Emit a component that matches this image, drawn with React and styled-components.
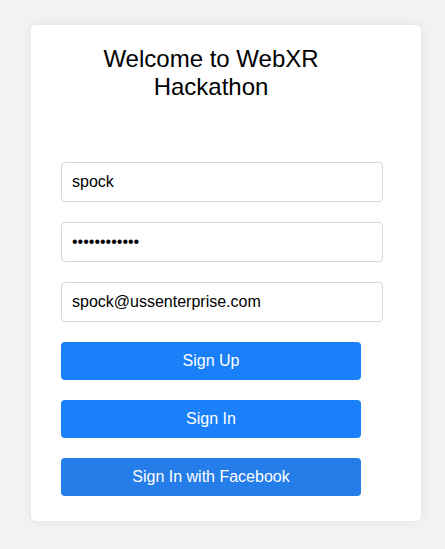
import React from 'react';
import styled, { createGlobalStyle } from 'styled-components';

const GlobalStyle = createGlobalStyle`
  html, body {
    margin: 0;
    padding: 0;
    background: #f2f2f2;
    font-family: "Liberation Sans", Arial, Helvetica, sans-serif;
  }
`;

const Page = styled.div`
  padding: 25px 0 29px 31px;
`;

const Card = styled.div`
  width: 330px;
  padding: 20px 30px 25px;
  background: #ffffff;
  border-radius: 5px;
  box-shadow: 0 0 10px rgba(0, 0, 0, 0.08);
`;

const Title = styled.h2`
  width: 300px;
  margin: 0 0 61px;
  font-size: 24px;
  font-weight: normal;
  line-height: normal;
  text-align: center;
  color: #000;
`;

const Form = styled.form`
  display: flex;
  flex-direction: column;
  align-items: flex-start;
  gap: 20px;
`;

const Input = styled.input`
  width: 300px;
  height: 18px;
  padding: 10px;
  border: 1px solid #d9d9d9;
  border-radius: 4px;
  font-family: "Liberation Sans", Arial, sans-serif;
  font-size: 16px;
  color: #000;
  outline: none;
`;

const Button = styled.button`
  width: 300px;
  height: 38px;
  border: none;
  border-radius: 4px;
  background: ${(p) => (p.$facebook ? '#247de9' : '#1a80fa')};
  color: #fff;
  font-family: "Liberation Sans", Arial, sans-serif;
  font-size: 16px;
  cursor: pointer;
`;

const App = () => {
  const handleSubmit = (event) => {
    event.preventDefault();
  };

  return (
    <>
      <GlobalStyle />
      <Page>
        <Card>
          <Title>Welcome to WebXR Hackathon</Title>
          <Form onSubmit={handleSubmit}>
            <Input type="text" name="username" defaultValue="spock" />
            <Input type="password" name="password" defaultValue="livelongpros" />
            <Input type="email" name="email" defaultValue="spock@ussenterprise.com" />
            <Button type="submit">Sign Up</Button>
            <Button type="button">Sign In</Button>
            <Button type="button" $facebook>Sign In with Facebook</Button>
          </Form>
        </Card>
      </Page>
    </>
  );
};

export default App;
